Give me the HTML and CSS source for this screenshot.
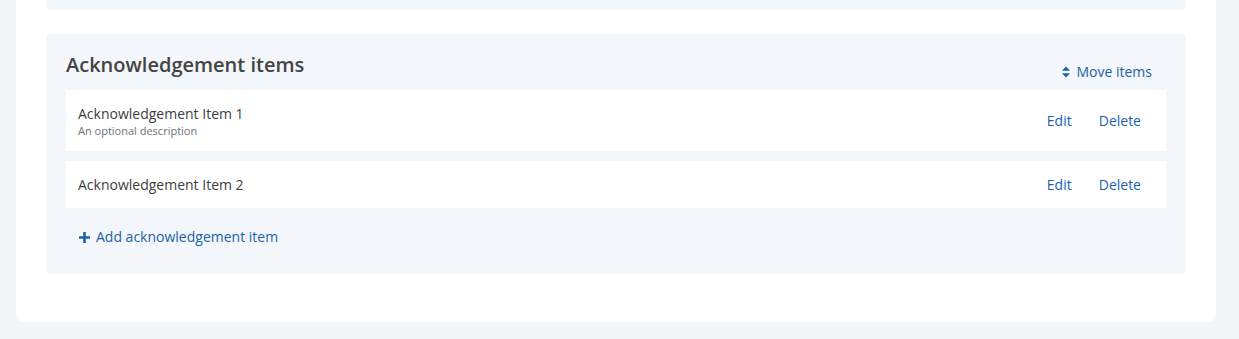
FILE: index.html
```html
<!DOCTYPE html>
<html>
<head>
<meta charset="utf-8">
<link rel="stylesheet" href="styles.css">
</head>
<body>
<div class="card">
  <div class="panel panel-prev"></div>
  <section class="panel">
    <div class="panel-head">
      <h2 class="title">Acknowledgement items</h2>
      <a class="link move">
        <svg class="icon-sort" viewBox="0 0 10 14" width="8" height="12"><path d="M5 0 L10 5.5 H0 Z M5 14 L0 8.5 H10 Z" fill="currentColor"/></svg>
        Move items
      </a>
    </div>
    <ul class="items">
      <li class="item">
        <div class="item-text">
          <div class="item-name">Acknowledgement Item 1</div>
          <div class="item-desc">An optional description</div>
        </div>
        <div class="actions"><a class="link">Edit</a><a class="link">Delete</a></div>
      </li>
      <li class="item">
        <div class="item-text">
          <div class="item-name">Acknowledgement Item 2</div>
        </div>
        <div class="actions"><a class="link">Edit</a><a class="link">Delete</a></div>
      </li>
    </ul>
    <a class="link add">
      <svg class="icon-plus" viewBox="0 0 12 12" width="11" height="11"><path d="M4.6 0 H7.4 V4.6 H12 V7.4 H7.4 V12 H4.6 V7.4 H0 V4.6 H4.6 Z" fill="currentColor"/></svg>
      Add acknowledgement item
    </a>
  </section>
</div>
</body>
</html>
```
FILE: styles.css
```css
* { box-sizing: border-box; }
html, body { margin: 0; padding: 0; }
body {
  background: #f4f5f9;
  font-family: "Open Sans", "Liberation Sans", sans-serif;
  height: 339px;
  overflow: hidden;
}
.card {
  margin: -40px 0 0 16px;
  width: 1200px;
  background: #ffffff;
  border-radius: 0 0 8px 8px;
  padding: 0 30px 48px;
}
.panel {
  background: #f3f6fa;
  border-radius: 4px;
  padding: 16px 20px 18px;
}
.panel-prev {
  height: 50px;
  margin-bottom: 24px;
}
.panel-head {
  display: flex;
  justify-content: space-between;
  align-items: flex-end;
  margin-bottom: 10px;
}
.title {
  margin: 0;
  font-size: 20px;
  line-height: 30px;
  font-weight: 600;
  color: #444444;
}
.link {
  color: #1b62a8;
  font-size: 14px;
  line-height: 20px;
  cursor: pointer;
  text-decoration: none;
}
.move {
  display: flex;
  align-items: center;
  gap: 6px;
  margin-right: 14px;
  margin-bottom: -2px;
}
.items {
  list-style: none;
  margin: 0;
  padding: 0;
  display: flex;
  flex-direction: column;
  gap: 10px;
}
.item {
  background: #ffffff;
  display: flex;
  align-items: center;
  justify-content: space-between;
  padding: 13px 25px 13px 12px;
}
.item-name {
  font-size: 14px;
  line-height: 21px;
  color: #3d3d3d;
}
.item-desc {
  font-size: 11px;
  line-height: 14px;
  color: #6b7078;
}
.actions {
  display: flex;
  gap: 27px;
}
.add {
  display: inline-flex;
  align-items: center;
  gap: 6px;
  margin-top: 10px;
  padding: 9px 13px;
}
```
